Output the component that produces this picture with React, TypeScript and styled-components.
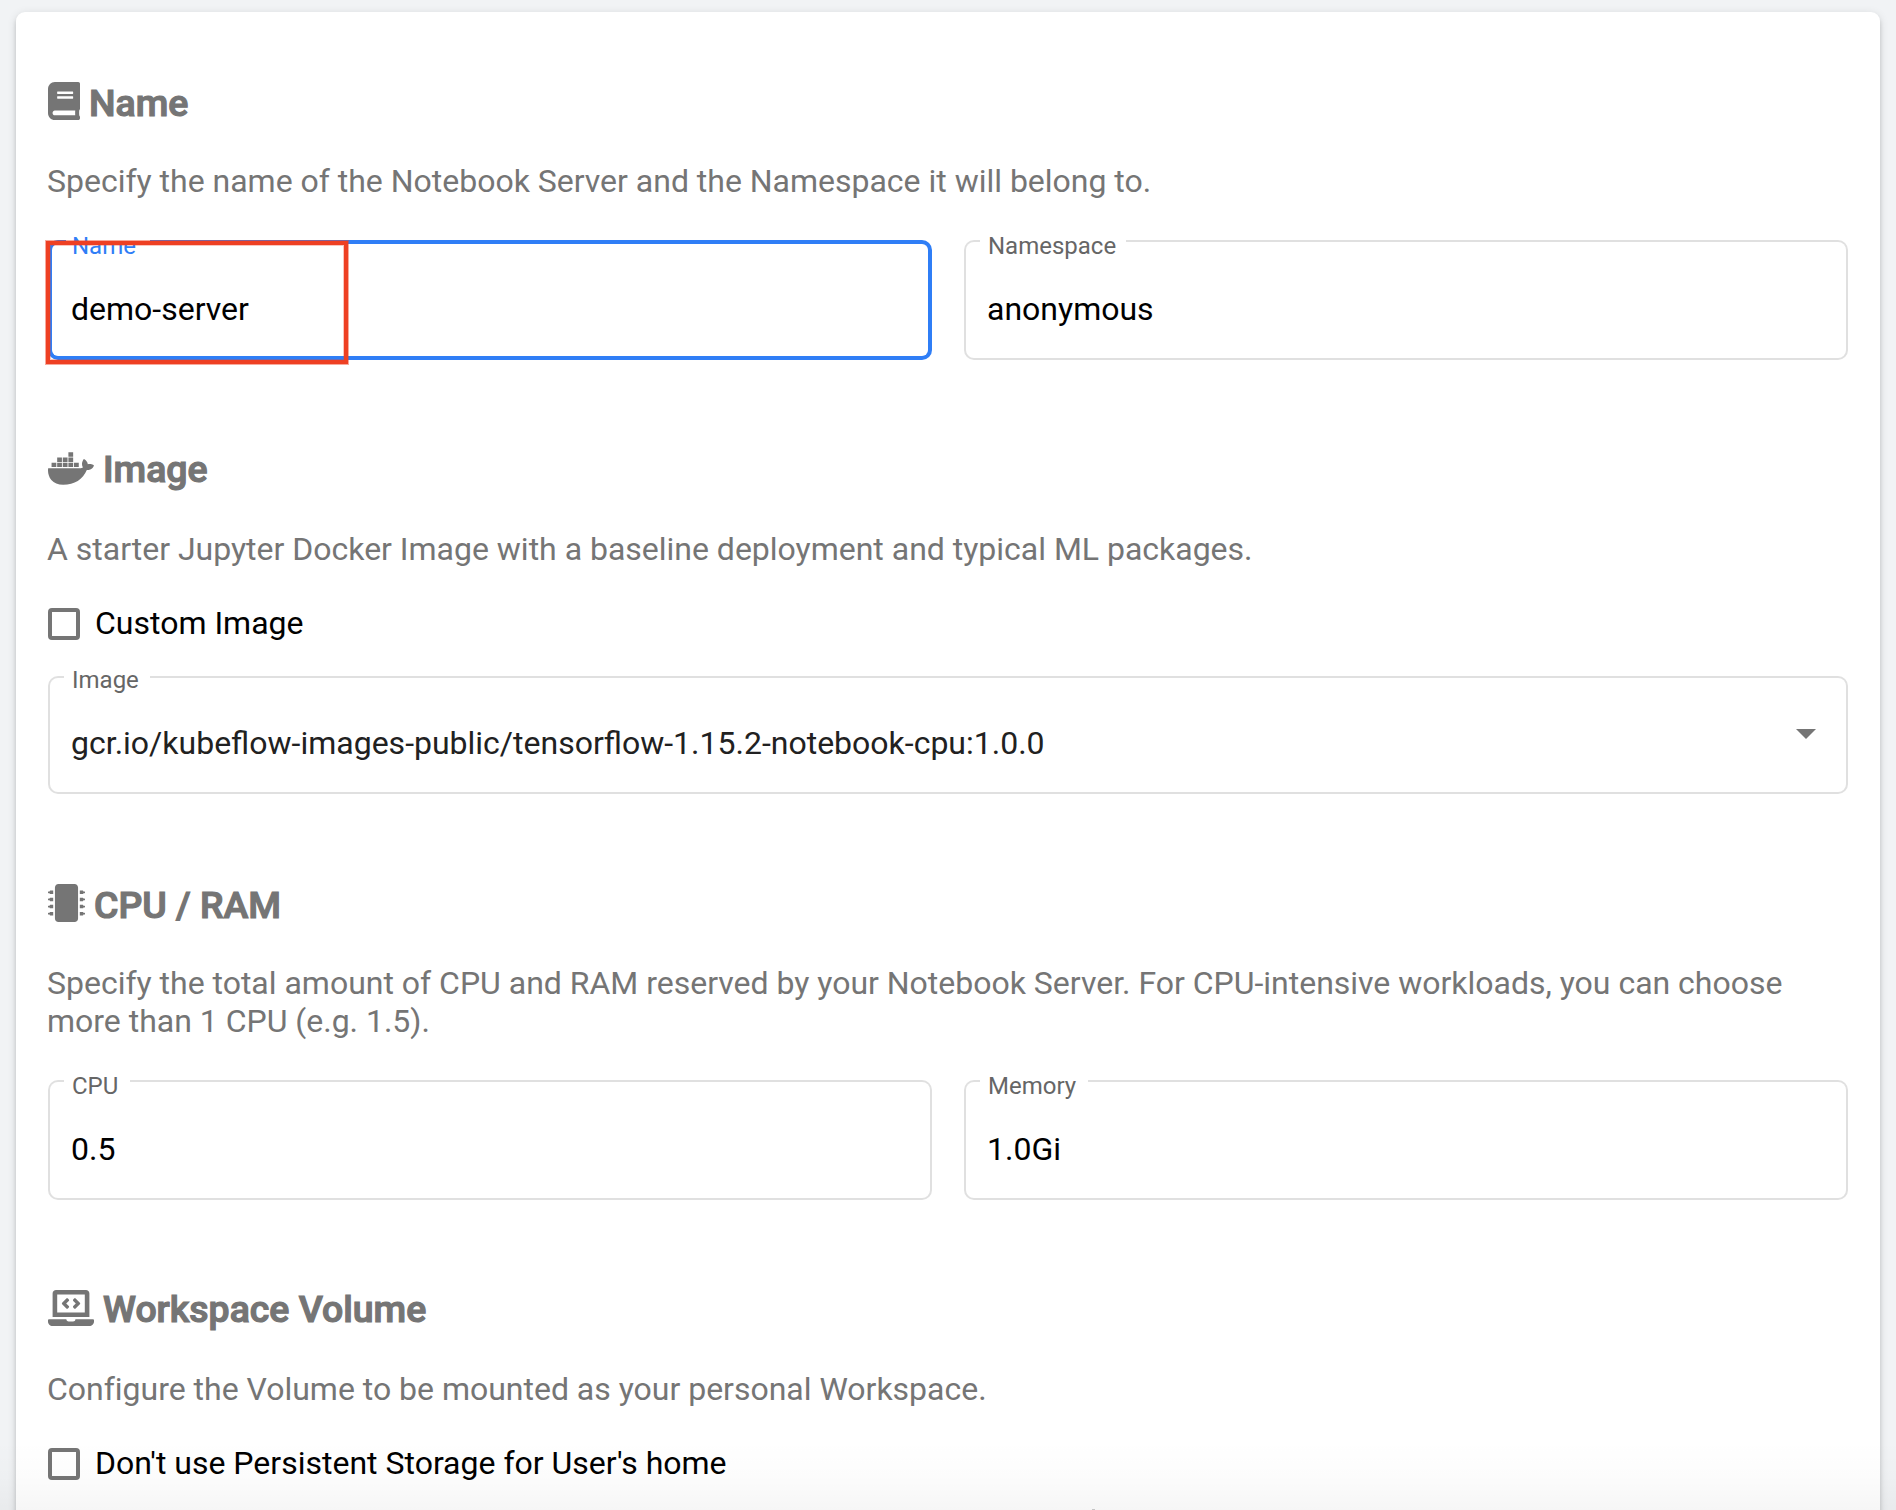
import React from "react";
import styled, { createGlobalStyle } from "styled-components";
import { FaBook, FaDocker, FaMicrochip, FaLaptopCode } from "react-icons/fa";
import type { IconType } from "react-icons";

const GlobalStyle = createGlobalStyle`
  *, *::before, *::after { box-sizing: border-box; }
  html, body { margin: 0; padding: 0; }
  body {
    background: #f1f3f5;
    font-family: Roboto, "Noto Sans", sans-serif;
    font-size: 32px;
    line-height: 38px;
    color: #000;
    overflow: hidden;
  }
`;

const Page = styled.main`
  position: relative;
  height: 1510px;
  padding: 12px 16px 0;
  overflow: hidden;
`;

const BottomFade = styled.div`
  position: absolute;
  inset: auto 0 0 0;
  height: 70px;
  background: linear-gradient(to bottom, rgba(0, 0, 0, 0), rgba(0, 0, 0, 0.01) 50%, rgba(0, 0, 0, 0.035));
  pointer-events: none;
`;

const Card = styled.form`
  display: flex;
  flex-direction: column;
  height: 1700px;
  padding: 69px 32px 0;
  background: #fff;
  border-radius: 9px;
  box-shadow:
    0 6px 2px -4px rgba(0, 0, 0, 0.2),
    0 4px 4px 0 rgba(0, 0, 0, 0.14),
    0 2px 10px 0 rgba(0, 0, 0, 0.12);
`;

const Section = styled.section<{ $after?: number }>`
  display: flex;
  flex-direction: column;
  margin-bottom: ${(p) => p.$after ?? 86}px;
`;

const Title = styled.h3<{ $gap: number; $line: number }>`
  display: flex;
  gap: 9px;
  height: 46px;
  margin: 0 0 ${(p) => p.$gap}px;
  font-size: 37.44px;
  line-height: ${(p) => p.$line}px;
  font-weight: 500;
  -webkit-text-stroke: 1.2px #757575;
  color: #757575;
`;

const IconBox = styled.span<{ $w: number; $h: number; $top: number }>`
  display: block;
  flex: none;
  width: ${(p) => p.$w}px;
  height: ${(p) => p.$h}px;
  margin-top: ${(p) => p.$top}px;

  svg {
    display: block;
    width: 100%;
    height: 100%;
  }
`;

const Description = styled.p`
  margin: 0 0 0 -1px;
  letter-spacing: -0.012px;
  color: #757575;
`;

const CheckRow = styled.label`
  display: flex;
  align-items: flex-start;
  gap: 15px;
  height: 38px;
  margin-top: 36px;
`;

const CheckBox = styled.span`
  width: 32px;
  height: 32px;
  margin-top: 4px;
  border: 4px solid #757575;
  border-radius: 4px;
`;

const FieldRow = styled.div<{ $top?: number }>`
  display: flex;
  gap: 32px;
  margin-top: ${(p) => p.$top ?? 40}px;
`;

const Field = styled.div<{ $short?: boolean }>`
  position: relative;
  display: flex;
  flex: 1;
  align-items: flex-start;
  justify-content: space-between;
  height: ${(p) => (p.$short ? 118 : 120)}px;
  padding: ${(p) => (p.$short ? 48 : 50)}px 32px 0 23px;
`;

const Outline = styled.div<{ $focused?: boolean }>`
  --line: ${(p) => (p.$focused ? "4px solid #2f7ef6" : "2px solid #e0e0e0")};
  position: absolute;
  inset: 0;
  display: flex;
`;

const OutlineStart = styled.div<{ $w: number }>`
  width: ${(p) => p.$w}px;
  border: var(--line);
  border-right: 0;
  border-radius: 10px 0 0 10px;
`;

const OutlineNotch = styled.div<{ $w: number }>`
  width: ${(p) => p.$w}px;
  border-bottom: var(--line);
`;

const OutlineEnd = styled.div`
  flex: 1;
  border: var(--line);
  border-left: 0;
  border-radius: 0 10px 10px 0;
`;

const FloatLabel = styled.span<{ $focused?: boolean; $short?: boolean }>`
  position: absolute;
  top: ${(p) => (p.$short ? -10 : -8)}px;
  left: 24px;
  font-size: 24px;
  line-height: 28px;
  color: ${(p) => (p.$focused ? "#2f7ef6" : "#666")};
`;

const Value = styled.span<{ $soft?: boolean }>`
  color: ${(p) => (p.$soft ? "#212121" : "#000")};
`;

const Arrow = styled.span`
  margin-top: 5px;
  border: 10px solid transparent;
  border-top-color: #757575;
  border-bottom: 0;
`;

const Highlight = styled.div`
  position: absolute;
  top: 1px;
  left: -2px;
  width: 302px;
  height: 123px;
  border: 4px solid #ee4023;
  box-shadow:
    0 0 0 1px rgba(238, 64, 35, 0.45),
    inset 0 0 0 1px rgba(238, 64, 35, 0.3);
`;

const Sliver = styled.i`
  position: absolute;
  left: 1092px;
  top: 1509px;
  width: 3px;
  height: 1px;
  background: #ccc;
`;

type HeadingProps = {
  icon: IconType;
  w: number;
  h: number;
  top: number;
  gap: number;
  line: number;
  children: string;
};

function Heading({ icon: Icon, w, h, top, gap, line, children }: HeadingProps) {
  return (
    <Title $gap={gap} $line={line}>
      <IconBox $w={w} $h={h} $top={top}>
        <Icon preserveAspectRatio="none" />
      </IconBox>
      {children}
    </Title>
  );
}

type TextFieldProps = {
  label: string;
  value: string;
  notch: number;
  focused?: boolean;
  select?: boolean;
  children?: React.ReactNode;
};

function TextField({ label, value, notch, focused, select, children }: TextFieldProps) {
  return (
    <Field $short={select}>
      <Outline $focused={focused}>
        <OutlineStart $w={focused ? 18 : 16} />
        <OutlineNotch $w={notch} />
        <OutlineEnd />
      </Outline>
      <FloatLabel $focused={focused} $short={select}>
        {label}
      </FloatLabel>
      <Value $soft={select}>{value}</Value>
      {select && <Arrow />}
      {children}
    </Field>
  );
}

function Check({ children }: { children: string }) {
  return (
    <CheckRow>
      <CheckBox />
      {children}
    </CheckRow>
  );
}

export default function App() {
  return (
    <>
      <GlobalStyle />
      <Page>
        <Card>
          <Section>
            <Heading icon={FaBook} w={32} h={38} top={1} gap={35} line={44}>Name</Heading>
            <Description>Specify the name of the Notebook Server and the Namespace it will belong to.</Description>
            <FieldRow>
              <TextField label="Name" value="demo-server" notch={84} focused>
                <Highlight />
              </TextField>
              <TextField label="Namespace" value="anonymous" notch={146} />
            </FieldRow>
          </Section>

          <Section $after={89}>
            <Heading icon={FaDocker} w={46} h={37} top={4} gap={38} line={46}>Image</Heading>
            <Description>A starter Jupyter Docker Image with a baseline deployment and typical ML packages.</Description>
            <Check>Custom Image</Check>
            <FieldRow $top={34}>
              <TextField
                label="Image"
                value="gcr.io/kubeflow-images-public/tensorflow-1.15.2-notebook-cpu:1.0.0"
                notch={86}
                select
              />
            </FieldRow>
          </Section>

          <Section>
            <Heading icon={FaMicrochip} w={37} h={38} top={1} gap={35} line={44}>CPU / RAM</Heading>
            <Description>
              Specify the total amount of CPU and RAM reserved by your Notebook Server. For CPU-intensive workloads, you
              can choose more than 1 CPU (e.g. 1.5).
            </Description>
            <FieldRow>
              <TextField label="CPU" value="0.5" notch={66} />
              <TextField label="Memory" value="1.0Gi" notch={108} />
            </FieldRow>
          </Section>

          <Section>
            <Heading icon={FaLaptopCode} w={46} h={36} top={4} gap={38} line={46}>Workspace Volume</Heading>
            <Description>Configure the Volume to be mounted as your personal Workspace.</Description>
            <Check>Don't use Persistent Storage for User's home</Check>
          </Section>
        </Card>
        <Sliver />
        <BottomFade />
      </Page>
    </>
  );
}
